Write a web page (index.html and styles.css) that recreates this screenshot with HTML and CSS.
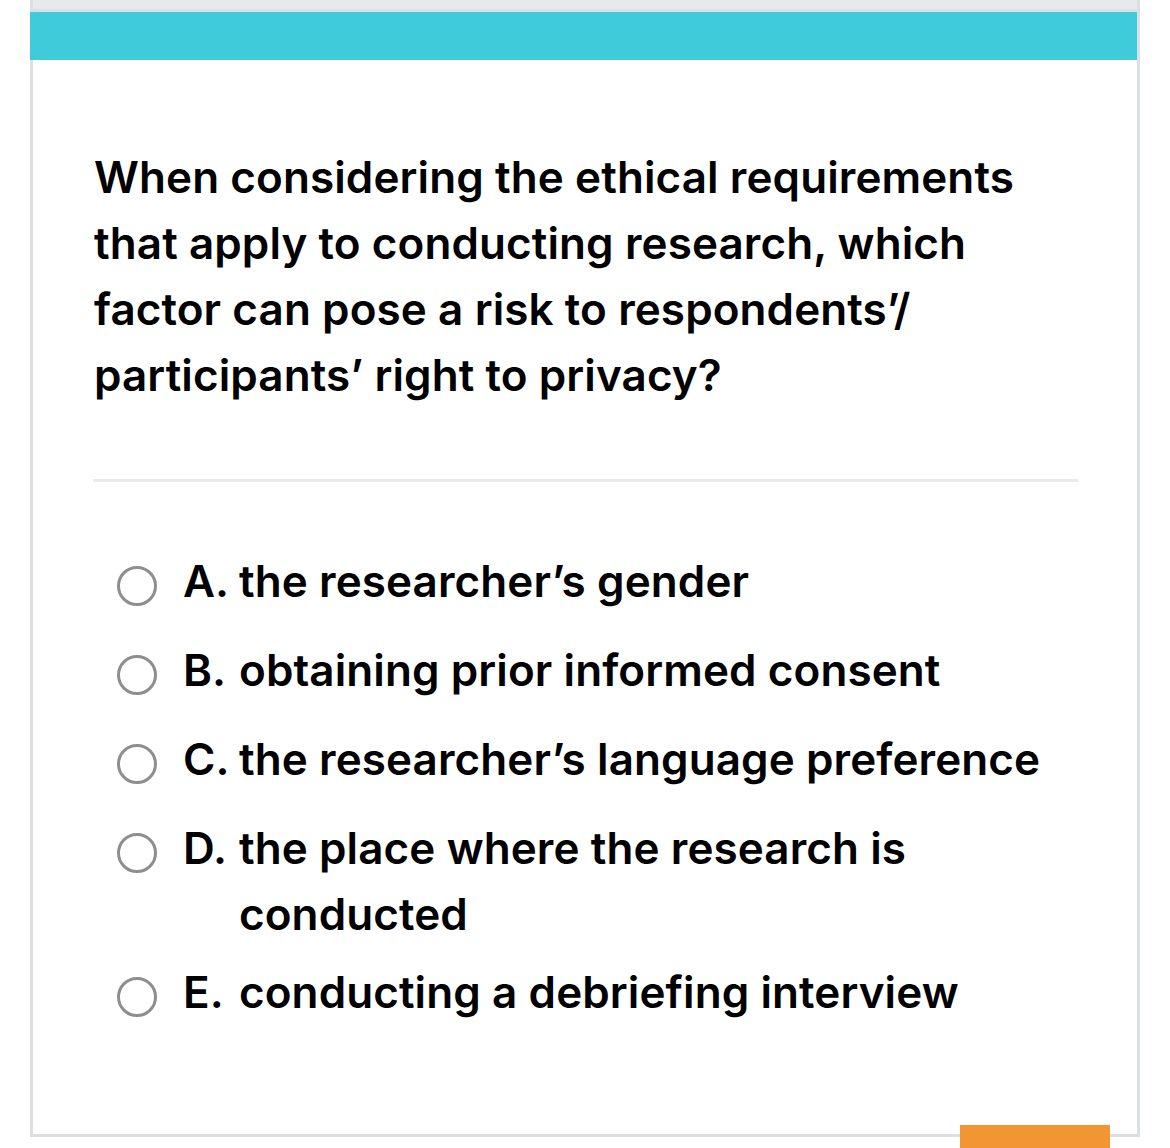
FILE: index.html
```html
<!DOCTYPE html>
<html>
<head>
<meta charset="utf-8">
<link rel="stylesheet" href="styles.css">
</head>
<body>
<div class="page">
  <div class="card">
    <div class="card-top"></div>
    <div class="card-bar"></div>
    <div class="card-body">
      <p class="question">When considering the ethical requirements that apply to conducting research, which factor can pose a risk to respondents’/ participants’ right to privacy?</p>
      <hr class="divider">
      <ul class="options">
        <li class="option"><span class="radio"></span><span class="letter">A.</span><span class="text">the researcher’s gender</span></li>
        <li class="option"><span class="radio"></span><span class="letter">B.</span><span class="text">obtaining prior informed consent</span></li>
        <li class="option"><span class="radio"></span><span class="letter">C.</span><span class="text">the researcher’s language preference</span></li>
        <li class="option"><span class="radio"></span><span class="letter">D.</span><span class="text">the place where the research is conducted</span></li>
        <li class="option"><span class="radio"></span><span class="letter">E.</span><span class="text">conducting a debriefing interview</span></li>
      </ul>
    </div>
    <div class="next-button"></div>
  </div>
</div>
</body>
</html>
```
FILE: styles.css
```css
html, body {
  margin: 0;
  padding: 0;
  background: #ffffff;
}
body {
  width: 1170px;
  height: 1148px;
  overflow: hidden;
  font-family: Inter, "Noto Sans", "Liberation Sans", sans-serif;
  color: #000;
}
.page {
  padding-left: 30px;
}
.card {
  position: relative;
  width: 1104px;
  height: 1134px;
  border: 3px solid #dcdfe3;
  border-top: none;
  background: #fff;
  box-sizing: content-box;
}
.card-top {
  height: 9px;
  background: #e7eaed;
  border-bottom: 3px solid #dcdfe3;
}
.card-bar {
  height: 48px;
  margin-left: -3px;
  background: #40cbdb;
}
.card-body {
  padding: 84px 60px 0 61px;
}
.question {
  margin: 0;
  font-size: 44px;
  font-weight: 600;
  line-height: 66px;
  letter-spacing: 0.1px;
  padding-right: 40px;
}
.divider {
  margin: 71px -1px 0 -1px;
  border: none;
  height: 3px;
  background: #e8eaed;
}
.options {
  list-style: none;
  margin: 66px 0 0 0;
  padding: 0 0 0 23px;
}
.option {
  display: flex;
  align-items: flex-start;
  min-height: 77px;
  margin-bottom: 12px;
  font-size: 44px;
  font-weight: 600;
  line-height: 66px;
  letter-spacing: 0.1px;
}
.radio {
  flex: none;
  width: 34px;
  height: 34px;
  border: 3.5px solid #8e8e8e;
  border-radius: 50%;
  margin-top: 18px;
  margin-right: 26px;
}
.letter {
  flex: none;
  width: 56px;
}
.text {
  flex: 1;
}
.next-button {
  position: absolute;
  left: 927px;
  top: 1125px;
  width: 150px;
  height: 30px;
  background: #f39533;
}
```
